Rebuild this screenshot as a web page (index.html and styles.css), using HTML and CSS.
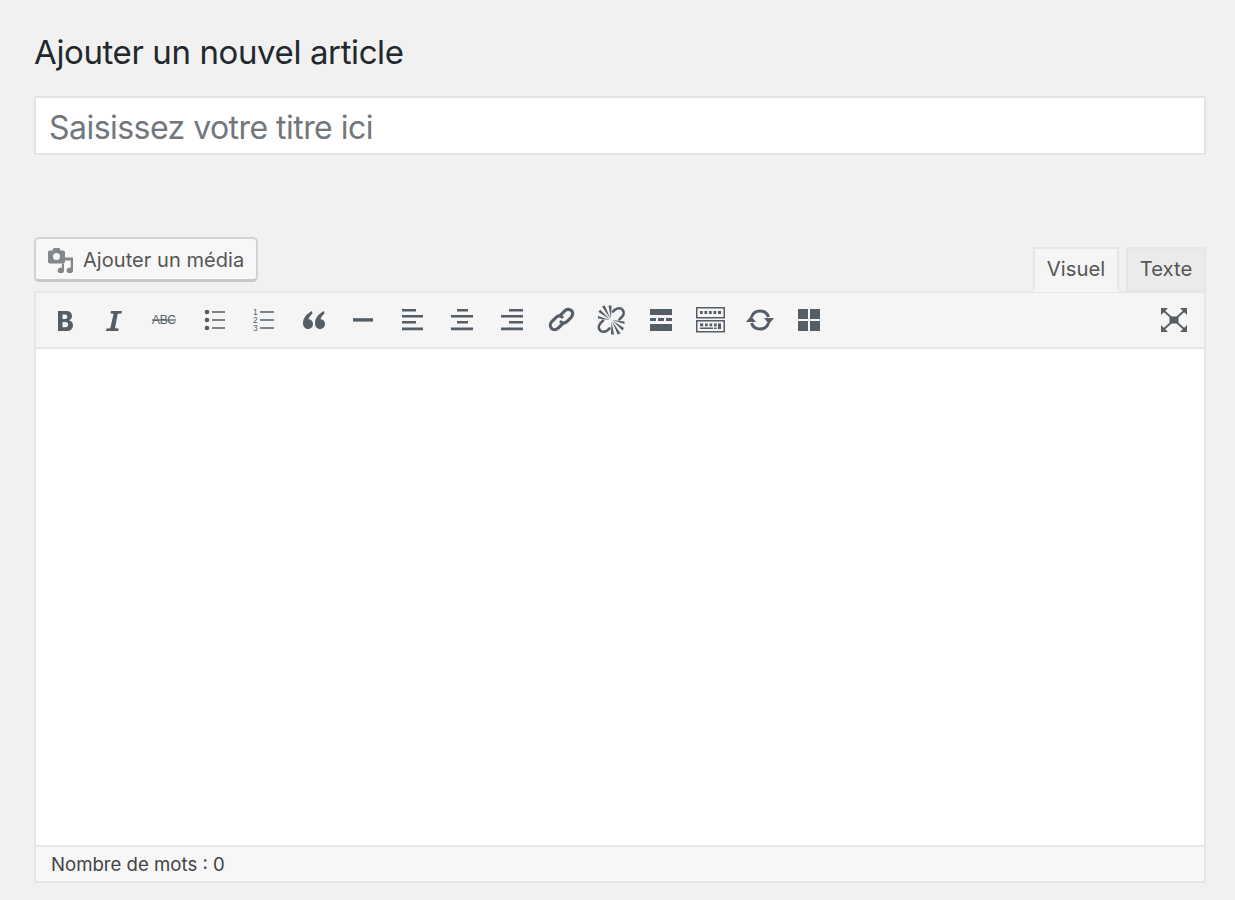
FILE: index.html
```html
<!DOCTYPE html>
<html lang="fr">
<head>
<meta charset="utf-8">
<title>Ajouter un nouvel article</title>
<link rel="stylesheet" href="styles.css">
</head>
<body>
<h1 class="page-title">Ajouter un nouvel article</h1>
<div class="title-box"><span class="title-placeholder">Saisissez votre titre ici</span></div>
<div class="editor-head">
  <button class="media-btn" type="button">
    <svg class="media-icon" viewBox="0 0 26 26" width="26" height="26">
      <path fill="#82878c" fill-rule="evenodd" d="M2 3.500h2.500l1-2.500h6l1 2.500h2.500a2 2 0 0 1 2 2v9a2 2 0 0 1-2 2H2a2 2 0 0 1-2-2v-9a2 2 0 0 1 2-2zM8.500 6a3.500 3.500 0 1 0 0 7 3.500 3.500 0 0 0 0-7z"/>
      <path fill="#82878c" d="M17 10.500h8V23.500a3.200 3 0 1 1-2.200-2.800V13.500H17zM14 16.500h2V23.500a3.200 3 0 1 1-2.200-2.800z"/>
    </svg>
    <span>Ajouter un média</span>
  </button>
  <div class="tabs">
    <div class="tab tab-active">Visuel</div>
    <div class="tab">Texte</div>
  </div>
</div>
<div class="editor">
  <div class="toolbar">
    <div class="tool"><svg viewBox="0 0 24 24"><path fill-rule="evenodd" d="M5 3h8c3.800 0 6 1.900 6 5 0 2-1.100 3.500-3 4.200 2.400.6 4 2.400 4 5 0 3.500-2.600 5.800-6.800 5.800H5zM9.500 6.500v4.500h2.500c1.500 0 2.300-.8 2.300-2.250S13.500 6.500 12 6.500zM9.500 14v5.200h3c1.700 0 2.700-1 2.700-2.600S14.200 14 12.500 14z"/></svg></div>
    <div class="tool"><svg viewBox="0 0 24 24"><path d="M9 3h11l-.5 2.500-3.800.3L13 20.200l3.700.3-.5 2.500H4l.5-2.500 3.800-.3L11.600 5.800l-3.100-.3z"/></svg></div>
    <div class="tool"><svg viewBox="0 0 24 24"><text class="abc" x="0" y="16.300" textLength="24">ABC</text><path d="M0 11.400h24v1.200H0z"/></svg></div>
    <div class="tool"><svg viewBox="0 0 24 24"><circle cx="5" cy="4" r="2.300"/><circle cx="5" cy="12" r="2.300"/><circle cx="5" cy="20" r="2.300"/><path d="M10 3.300h13v1.500H10zM10 11.300h13v1.500H10zM10 19.300h13v1.500H10z"/></svg></div>
    <div class="tool"><svg viewBox="0 0 24 24"><path d="M9 3.300h14v1.500H9zM9 11.300h14v1.500H9zM9 19.300h14v1.500H9z"/><text class="num" x="2" y="7">1</text><text class="num" x="2" y="15">2</text><text class="num" x="2" y="23">3</text></svg></div>
    <div class="tool"><svg viewBox="0 0 24 24"><path d="M11 3C6 5.500 2 10 2 15c0 3.500 2 6 5 6s5-2.200 5-5-2-4.800-4.500-4.800c.5-2 2-4 4-5.700zM23 3C18 5.500 14 10 14 15c0 3.500 2 6 5 6s5-2.200 5-5-2-4.800-4.500-4.800c.5-2 2-4 4-5.700z"/></svg></div>
    <div class="tool"><svg viewBox="0 0 24 24"><path d="M2 10.200h20v3.400H2z"/></svg></div>
    <div class="tool"><svg viewBox="0 0 24 24"><path d="M2 1h14v2.600H2zM2 7h21v2.600H2zM2 13h14v2.600H2zM2 19.500h21v2.800H2z"/></svg></div>
    <div class="tool"><svg viewBox="0 0 24 24"><path d="M7 1h11v2.600H7zM1 7h22v2.600H1zM7 13h11v2.600H7zM1 19.500h22v2.800H1z"/></svg></div>
    <div class="tool"><svg viewBox="0 0 24 24"><path d="M9 1h14v2.600H9zM1 7h22v2.600H1zM9 13h14v2.600H9zM1 19.500h22v2.800H1z"/></svg></div>
    <div class="tool"><svg viewBox="0 0 24 24"><g class="line" transform="translate(12.500 11.500) scale(1.200) translate(-12 -12)"><path d="M11 8.500l3.500-3.500c1.800-1.800 4.300-1.900 5.800-.4s1.400 4-.4 5.800l-3 3c-1.800 1.800-4 1.800-5.400.6"/><path d="M13 15.500L9.500 19c-1.800 1.800-4.300 1.900-5.800.4s-1.400-4 .4-5.800l3-3c1.800-1.800 4-1.800 5.400-.6"/></g></svg></div>
    <div class="tool"><svg viewBox="0 0 24 24"><g class="line"><path d="M14 3.500l2-1.700c2.600-2.200 6-2 7.600 0 1.700 2 1.300 5-.7 7.100l-2.400 2.500"/><path d="M10.500 20.500l-2 1.700c-2.600 2.200-6 2-7.600 0-1.700-2-1.300-5 .7-7.100l2.400-2.500"/></g><path d="M11 11.500L-.5 4 1 1.500zM11.500 11L3 -1.500 5.800 -2.500zM12 10.500L9.500 -2.500h3zM11 12L-1 8v2.500zM13.500 12.500L25 20l-1.500 2.500zM13 13l8.500 12.500 -2.800 1zM12.500 13.500L15 26.500h-3zM13.500 12L25.500 16v-2.500z"/></svg></div>
    <div class="tool"><svg viewBox="0 0 24 24"><path d="M1 1h22v6H1zM1 10h6v3H1zM9 10h6v3H9zM17 10h6v3h-6zM1 16h22v7H1z"/></svg></div>
    <div class="tool tool-wide"><svg viewBox="0 0 29 26"><path fill-rule="evenodd" d="M0 0h29v11.500H0zm1.500 1.500v8.500h26V1.500zM0 13h29v12.500H0zm1.500 1.500v9.500h26v-9.500z"/><path d="M4 4h2.700v3H4zM8.500 4h2.700v3H8.500zM13 4h2.700v3H13zM17.500 4h2.700v3H17.500zM22 4h3v3h-3zM4 16.500h3.200v2.700H4zM9 16.500h2.700v2.700H9zM13.500 16.500h2.700v2.700h-2.700zM18 16.500h2.700v2.700H18zM22 16.500h3v5.500h-3zM4 20.500h13v1.500H4zM18 20.500h2.700v1.500H18z"/></svg></div>
    <div class="tool"><svg viewBox="0 0 24 24"><g class="line sync"><path d="M3.500 9A9 9 0 0 1 20.500 9"/><path d="M20.500 15A9 9 0 0 1 3.500 15"/></g><path d="M16 10h10l-5 6zM-2 14H8L3 8z"/></svg></div>
    <div class="tool"><svg viewBox="0 0 24 24"><path d="M1 1h10v10H1zM13 1h10v10H13zM1 13h10v10H1zM13 13h10v10H13z"/></svg></div>
    <div class="tool tool-end"><svg viewBox="0 0 26 24"><path d="M8.500 8.500h9v7h-9zM0 0h7L0 7zM26 0v7L19 0zM0 24v-7l7 7zM26 24h-7l7-7z"/><g class="line expand"><path d="M3 3L23 21"/><path d="M23 3L3 21"/></g></svg></div>
  </div>
  <div class="editor-body"></div>
  <div class="status">Nombre de mots : 0</div>
</div>
</body>
</html>
```

FILE: styles.css
```css
* { box-sizing: border-box; }
html, body { margin: 0; }
body {
  width: 1235px;
  height: 900px;
  overflow: hidden;
  background: #f1f1f1;
  padding: 0 29px 0 34px;
  font-family: Inter, "Liberation Sans", sans-serif;
  color: #444;
}
.page-title {
  margin: 0;
  height: 96px;
  padding-top: 32px;
  font-size: 33px;
  line-height: 40px;
  font-weight: 400;
  color: #23282d;
  letter-spacing: -0.39px;
}
.title-box {
  height: 59px;
  background: #fff;
  border: 2px solid #e4e4e4;
  padding: 3px 0 0 13px;
  display: flex;
  align-items: center;
}
.title-placeholder {
  font-size: 32px;
  color: #72777c;
  letter-spacing: -0.54px;
}
.editor-head {
  margin-top: 82px;
  height: 55px;
  display: flex;
  justify-content: space-between;
  align-items: flex-end;
  position: relative;
  z-index: 1;
  margin-bottom: -1px;
}
.media-btn {
  align-self: flex-start;
  width: 224px;
  height: 45px;
  padding: 1px 0 0 12px;
  display: flex;
  align-items: center;
  gap: 9px;
  background: #f7f7f7;
  border: 2px solid #d2d2d2;
  border-bottom: 3px solid #c8c8c8;
  border-radius: 5px;
  font-family: inherit;
  font-size: 20px;
  color: #555;
  letter-spacing: 0.05px;
}
.media-icon { flex: none; }
.tabs { display: flex; gap: 7px; }
.tab {
  width: 80px;
  height: 45px;
  padding-bottom: 2px;
  background: #ebebeb;
  border: 2px solid #e6e6e6;
  border-bottom: 2px solid #e6e6e6;
  display: flex;
  align-items: center;
  justify-content: center;
  font-size: 20.300px;
  color: #555;
}
.tab-active {
  width: 86px;
  background: #f5f5f5;
  border-bottom-color: #f5f5f5;
}
.editor {
  height: 592px;
  border: 2px solid #e6e6e6;
  border-top: 0;
  display: flex;
  flex-direction: column;
  background: #fff;
}
.toolbar {
  height: 58px;
  flex: none;
  background: #f5f5f5;
  border-top: 2px solid #e6e6e6;
  border-bottom: 2px solid #e6e6e6;
  padding-left: 4px;
  display: flex;
  align-items: center;
}
.tool {
  flex: none;
  width: 49.650px;
  height: 26px;
  display: flex;
  align-items: center;
  justify-content: center;
}
.tool svg { width: 24px; height: 24px; fill: #555d66; overflow: visible; }
.tool-wide svg { width: 29px; height: 26px; }
.tool-end { margin-left: auto; margin-right: 5px; }
.tool-end svg { width: 26px; }
.line { fill: none; stroke: #555d66; stroke-width: 2.600px; stroke-linecap: round; }
.sync { stroke-width: 3px; stroke-linecap: butt; }
.expand { stroke-width: 1.800px; stroke-linecap: butt; }
.abc { font-size: 12px; font-family: "Liberation Sans", sans-serif; }
.num { font-size: 8.500px; font-family: "Liberation Sans", sans-serif; }
.editor-body { flex: 1; background: #fff; }
.status {
  height: 36px;
  flex: none;
  background: #f7f7f7;
  border-top: 2px solid #e6e6e6;
  padding-left: 15px;
  display: flex;
  align-items: center;
  font-size: 18.600px;
  color: #444;
}
```
